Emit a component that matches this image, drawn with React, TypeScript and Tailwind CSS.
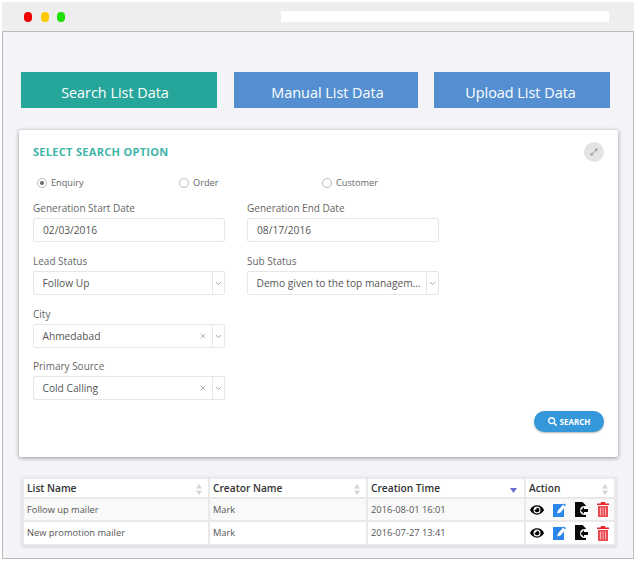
import { ChevronDown, X } from 'lucide-react';
import { FaEye, FaSearch, FaExpandAlt } from 'react-icons/fa';

const font = "font-['Open_Sans',sans-serif]";

function Radio({ label, checked = false, className = '' }: { label: string; checked?: boolean; className?: string }) {
  return (
    <div className={`flex items-center ${className}`}>
      <span className="flex h-[10px] w-[10px] items-center justify-center rounded-full border border-[#bbb] bg-white">
        {checked && <span className="h-[4px] w-[4px] rounded-full bg-[#666]" />}
      </span>
      <span className="ml-[4px] text-[9.2px] leading-[14px] text-[#666]">{label}</span>
    </div>
  );
}

function Field({ label, children, className = '' }: { label: string; children: React.ReactNode; className?: string }) {
  return (
    <div className={`w-[192px] ${className}`}>
      <div className="h-[15px] pt-[1px] text-[10px] leading-[15px] text-[#666]">{label}</div>
      {children}
    </div>
  );
}

function TextBox({ value }: { value: string }) {
  return (
    <div className="mt-[3px] flex h-[24px] items-center rounded-[2px] border border-[#e6e6e6] bg-white pl-[9px] pt-[1px] text-[10.2px] text-[#555]">
      {value}
    </div>
  );
}

function SelectBox({ value, clearable = false }: { value: string; clearable?: boolean }) {
  return (
    <div className="mt-[3px] flex h-[24px] items-center rounded-[2px] border border-[#e6e6e6] bg-white text-[10.2px] text-[#555]">
      <span className="flex-1 whitespace-nowrap pl-[8.500px] pt-[1px]">{value}</span>
      {clearable && <X className="mr-[5px] h-[8px] w-[8px] text-[#888]" />}
      <span className="flex h-full w-[12px] items-center justify-center border-l border-[#e6e6e6]">
        <ChevronDown className="h-[9px] w-[9px] text-[#888]" />
      </span>
    </div>
  );
}

function SortIcon({ active = false }: { active?: boolean }) {
  if (active) {
    return (
      <svg width="7" height="5" viewBox="0 0 7 5" className="absolute bottom-[4px] right-[7px]">
        <path d="M0 0h7L3.5 5z" fill="#6a6fd0" />
      </svg>
    );
  }
  return (
    <svg width="6" height="11" viewBox="0 0 6 11" className="absolute right-[6px] top-[5px]">
      <path d="M0 4.5 3 0l3 4.5zM0 6.5 3 11l3-4.5z" fill="#d4d6da" />
    </svg>
  );
}

function EditIcon() {
  return (
    <svg width="13" height="14" viewBox="0 0 13 14">
      <path d="M0 1h11v13H0z" fill="#2a86e8" />
      <path d="M4 10.500 5 7.500 10.500 1l2.500 2-5.500 6.500z" fill="#ffffff" />
      <path d="M11 .5 13 2l-1 1.200-2-1.500z" fill="#2a86e8" />
    </svg>
  );
}

function ExportIcon() {
  return (
    <svg width="14" height="16" viewBox="0 0 14 16">
      <path d="M0 0h7.500L11 3.500V15H0z" fill="#0a0a0a" />
      <circle cx="9.500" cy="8.500" r="4.500" fill="#ffffff" />
      <path d="M5.500 8.500 9 5v2h4v3H9v2z" fill="#0a0a0a" />
    </svg>
  );
}

function TrashIcon() {
  return (
    <svg width="12" height="15" viewBox="0 0 12 15">
      <path d="M4 0h4l.5 1.500H12V3H0V1.500h3.500z" fill="#e8262c" />
      <path d="M1 4h10v11H1z" fill="#ec4a4e" />
      <path d="M3.500 5.500v8M6 5.500v8M8.500 5.500v8" stroke="#f8b6b8" strokeWidth="1" />
    </svg>
  );
}

function Actions() {
  return (
    <div className="flex items-center pl-[4px]">
      <FaEye className="h-[14px] w-[14px] text-black" />
      <span className="ml-[9px] flex"><EditIcon /></span>
      <span className="ml-[9px] flex"><ExportIcon /></span>
      <span className="ml-[8px] flex"><TrashIcon /></span>
    </div>
  );
}

const rows = [
  { name: 'Follow up mailer', creator: 'Mark', time: '2016-08-01 16:01', bg: 'bg-[#f9f9f9]', height: 'h-[23px]' },
  { name: 'New promotion mailer', creator: 'Mark', time: '2016-07-27 13:41', bg: 'bg-white', height: 'h-[24px]' },
];

export default function App() {
  return (
    <div className={`h-[562px] w-[637px] overflow-hidden bg-white pl-[2px] pr-[3px] pt-[2px] ${font}`}>
      {/* Browser chrome */}
      <div className="relative h-[29px] bg-[#eeeeee]">
        <div className="flex items-center pl-[22px] pt-[10px]">
          <span className="h-[10px] w-[8px] rounded-full bg-[#f00000]" />
          <span className="ml-[9px] h-[10px] w-[8px] rounded-full bg-[#ffc800]" />
          <span className="ml-[8px] h-[10px] w-[8px] rounded-full bg-[#22e000]" />
        </div>
        <div className="absolute left-[279px] top-[9px] h-[11px] w-[328px] bg-white" />
      </div>

      <div className="h-[528px] border border-[#bbbbbb] bg-[#f3f4f8]">
        {/* Tabs */}
        <div className="flex pl-[18px] pt-[40px]">
          <div className="flex h-[36px] w-[196px] items-center justify-center bg-[#26a69a] pr-[8px] pt-[6px] text-[14.4px] text-white">Search List Data</div>
          <div className="ml-[17px] flex h-[36px] w-[184px] items-center justify-center bg-[#5490d1] pl-[3px] pt-[6px] text-[14.4px] text-white">Manual List Data</div>
          <div className="ml-[16px] flex h-[36px] w-[176px] items-center justify-center bg-[#5490d1] pr-[3px] pt-[6px] text-[14.4px] text-white">Upload List Data</div>
        </div>

        {/* Search panel */}
        <div className="relative ml-[16px] mt-[22px] h-[327px] w-[599px] rounded-[2px] bg-white pl-[14px] shadow-[0_1px_4px_rgba(0,0,0,0.4)]">
          <div className="pt-[15px] text-[11px] font-bold leading-[14px] tracking-[0.3px] text-[#3db5a8]">SELECT SEARCH OPTION</div>
          <div className="absolute right-[14px] top-[12px] flex h-[20px] w-[20px] items-center justify-center rounded-full bg-[#e4e4e4]">
            <FaExpandAlt className="h-[8px] w-[8px] text-[#999]" />
          </div>

          <div className="mt-[17px] flex h-[14px]">
            <Radio label="Enquiry" checked className="ml-[4px] w-[142px]" />
            <Radio label="Order" className="w-[143px]" />
            <Radio label="Customer" />
          </div>

          <div className="mt-[10px] flex">
            <Field label="Generation Start Date"><TextBox value="02/03/2016" /></Field>
            <Field label="Generation End Date" className="ml-[22px]"><TextBox value="08/17/2016" /></Field>
          </div>
          <div className="mt-[11px] flex">
            <Field label="Lead Status"><SelectBox value="Follow Up" /></Field>
            <Field label="Sub Status" className="ml-[22px]"><SelectBox value="Demo given to the top managem..." /></Field>
          </div>
          <Field label="City" className="mt-[11px]"><SelectBox value="Ahmedabad" clearable /></Field>
          <Field label="Primary Source" className="mt-[10px]"><SelectBox value="Cold Calling" clearable /></Field>

          <div className="absolute bottom-[25px] right-[14px] flex h-[21px] w-[70px] items-center justify-center rounded-full bg-[#3498db] text-[8px] font-bold text-white shadow-[0_1px_2px_rgba(0,0,0,0.3)]">
            <FaSearch className="mr-[3px] h-[9px] w-[9px]" />
            SEARCH
          </div>
        </div>

        {/* List table */}
        <table className="ml-[19px] mt-[20px] w-[594px] table-fixed border-collapse bg-white text-[9.3px] text-[#555] shadow-[0_1px_3px_rgba(0,0,0,0.15)]">
          <thead>
            <tr className="h-[20px] text-[10.2px] font-semibold text-[#333]">
              <th className="relative w-[186px] border-2 border-[#e9e9e9] pl-[3px] pt-[2px] text-left font-semibold">List Name<SortIcon /></th>
              <th className="relative w-[158px] border-2 border-[#e9e9e9] pl-[3px] pt-[2px] text-left font-semibold">Creator Name<SortIcon /></th>
              <th className="relative w-[158px] border-2 border-[#e9e9e9] pl-[3px] pt-[2px] text-left font-semibold">Creation Time<SortIcon active /></th>
              <th className="relative border-2 border-[#e9e9e9] pl-[3px] pt-[2px] text-left font-semibold">Action<SortIcon /></th>
            </tr>
          </thead>
          <tbody>
            {rows.map((row) => (
              <tr key={row.name} className={`${row.height} ${row.bg}`}>
                <td className="border-2 border-[#e9e9e9] pl-[3px]">{row.name}</td>
                <td className="border-2 border-[#e9e9e9] pl-[3px]">{row.creator}</td>
                <td className="border-2 border-[#e9e9e9] pl-[3px]">{row.time}</td>
                <td className="border-2 border-[#e9e9e9]"><Actions /></td>
              </tr>
            ))}
          </tbody>
        </table>
      </div>
    </div>
  );
}
